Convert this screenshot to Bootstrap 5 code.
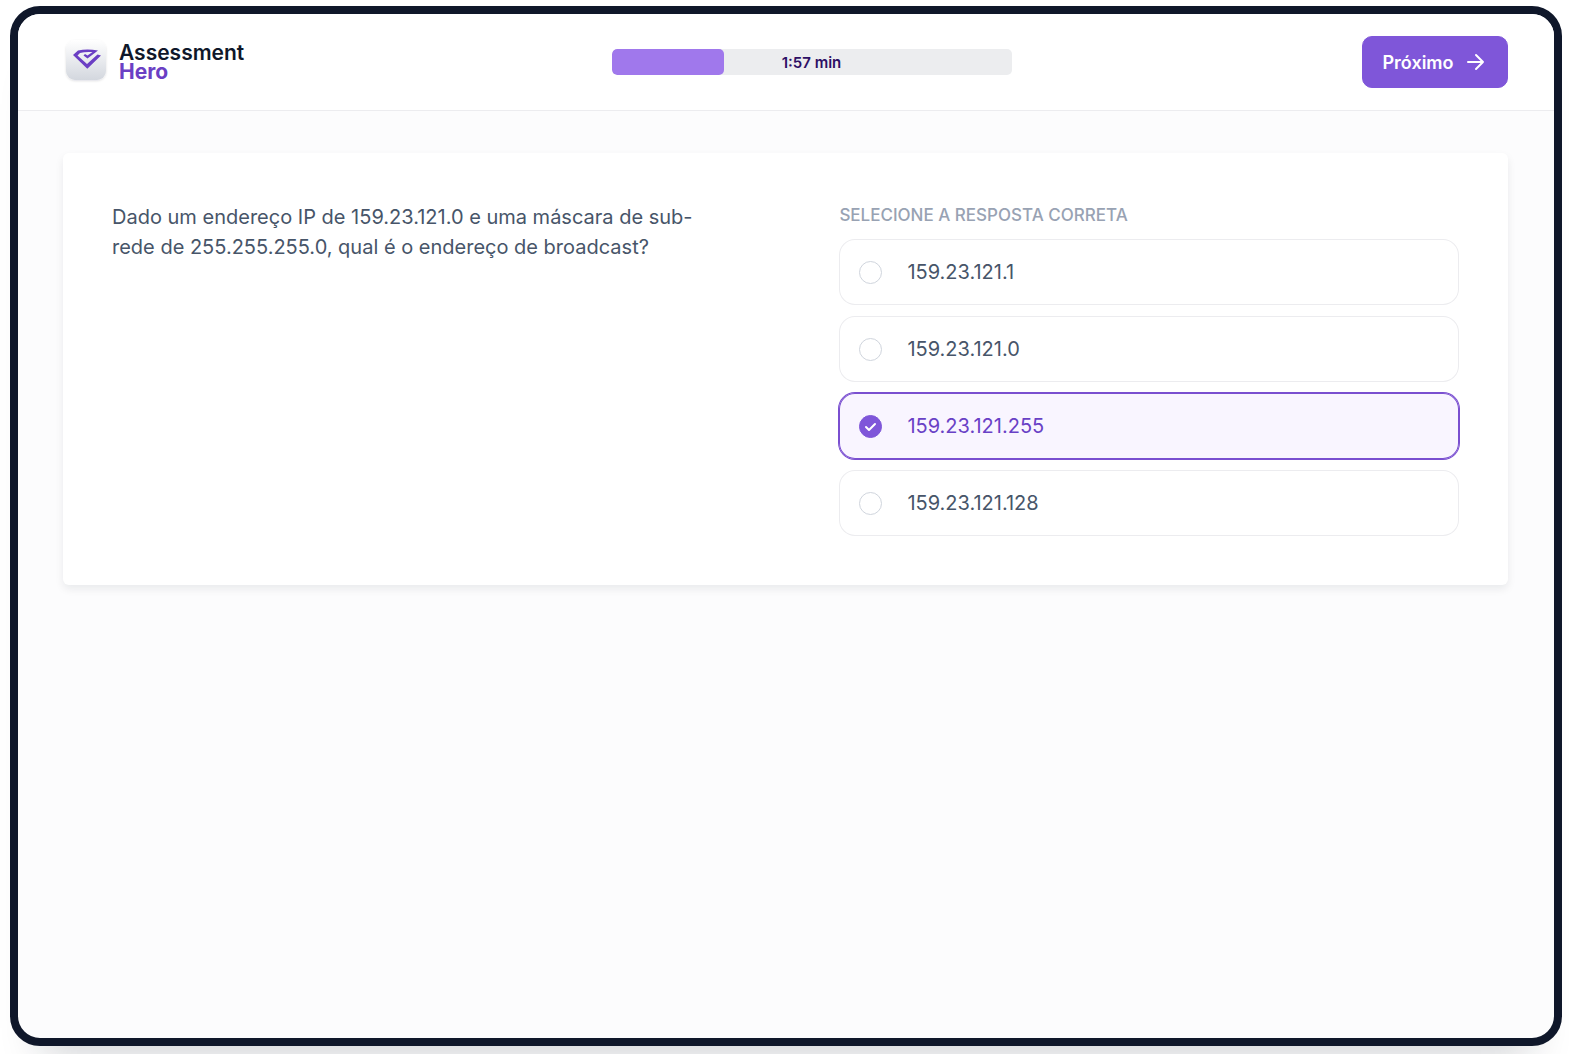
<!DOCTYPE html>
<html lang="pt-BR">
<head>
<meta charset="utf-8">
<meta name="viewport" content="width=device-width, initial-scale=1">
<title>Assessment Hero</title>
<link href="https://cdn.jsdelivr.net/npm/bootstrap@5.3.0/dist/css/bootstrap.min.css" rel="stylesheet">
<style>
  body { font-family: Inter, "Liberation Sans", sans-serif; background: #fff; color: #475569; }
  .page-shell { min-height: 100vh; overflow: hidden; }
  .device { margin: 6px 7px 8px 10px; border: 8px solid #0f172a; border-radius: 30px; background: #fcfcfd; min-height: calc(100vh - 14px); box-shadow: 0 40px 40px -32px rgba(15, 23, 42, .2); overflow: hidden; }
  .topbar { height: 97px; padding: 0 46px 0 45px; background: #fff; border-bottom: 1px solid #ececef; }
  .brand { width: 198px; color: #0f172a; font-size: 21px; line-height: 19px; font-weight: 600; gap: 9px; }
  .brand-name { color: #6b3fc4; font-weight: 700; }
  .timer { position: relative; width: 400px; height: 26px; border-radius: 5px; background: #ecedef; }
  .timer .progress-bar { background: #a078ec; border-radius: 5px; }
  .timer-text { position: absolute; inset: 0; color: #2e1065; font-size: 15px; line-height: 27px; font-weight: 600; }
  .btn-next { --bs-btn-color: #fff; --bs-btn-bg: #7f56d9; --bs-btn-border-color: #7f56d9; --bs-btn-hover-color: #fff; --bs-btn-hover-bg: #6b3fc4; --bs-btn-hover-border-color: #6b3fc4; width: 146px; height: 52px; padding: 0; border-radius: 10px; font-size: 18px; font-weight: 600; gap: 12px; }
  .content { padding: 42px 46px 42px 45px; }
  .quiz { padding: 49px; border-radius: 6px; background: #fff; box-shadow: 0 4px 8px rgba(15, 23, 42, .08); }
  .question { font-size: 20px; line-height: 30px; max-width: 600px; }
  .answers { width: 46%; }
  .legend-text { font-size: 17px; line-height: 26px; color: #98a2b3; margin-bottom: 11px; font-weight: 500; }
  .option-list { gap: 11px; }
  .option { height: 66px; padding: 0 20px; gap: 25px; border-radius: 16px; box-shadow: inset 0 0 0 1px #ececef; font-size: 20px; color: #475569; cursor: pointer; }
  .option .form-check-input { width: 23px; height: 23px; margin: 0; border-color: #d0d5dd; box-shadow: none; }
  .option:has(:checked) { background: #f9f5ff; color: #6941c6; box-shadow: 0 0 0 1px #7a4fd0, inset 0 0 0 1px #7a4fd0; }
  .option .form-check-input:checked { border-color: #7f56d9; background-color: #7f56d9; background-size: 23px 23px; background-image: url("data:image/svg+xml,%3csvg xmlns='http://www.w3.org/2000/svg' viewBox='0 0 23 23'%3e%3cpath d='M7 12l3 3 6-6' fill='none' stroke='%23fff' stroke-width='2' stroke-linecap='round' stroke-linejoin='round'/%3e%3c/svg%3e"); }
</style>
</head>
<body>
<div class="page-shell">
<div class="device">
  <header class="topbar d-flex align-items-center justify-content-between">
    <a href="#" class="brand d-flex align-items-center text-decoration-none">
      <svg width="47" height="48" viewBox="0 0 47 48" aria-hidden="true">
        <defs>
          <linearGradient id="tile" x1="0" y1="0" x2="0" y2="1"><stop offset="0" stop-color="#fff"/><stop offset="1" stop-color="#d3d7de"/></linearGradient>
          <filter id="soft" x="-20%" y="-20%" width="140%" height="140%"><feDropShadow dx="0" dy="1" stdDeviation="1" flood-color="#101828" flood-opacity=".13"/></filter>
        </defs>
        <rect x="3" y="2" width="40" height="40" rx="9" fill="url(#tile)" filter="url(#soft)"/>
        <path fill="#6b3fc4" d="M10 17 L15 12.500 Q24 10.500 35 12.500 L24.500 20.500 L20.500 17.500 L22 16 L24.500 17.500 L29.500 14 Q22 13.500 17 15 L14.500 17.500 L24 26 L34.500 16.500 L38 17.500 L24.300 30.800 Z"/>
      </svg>
      <span><span class="d-block">Assessment</span><span class="d-block brand-name">Hero</span></span>
    </a>
    <div class="timer progress" role="progressbar" aria-label="Tempo restante" aria-valuenow="28" aria-valuemin="0" aria-valuemax="100">
      <div class="progress-bar" style="width: 28%"></div>
      <span class="timer-text text-center">1:57 min</span>
    </div>
    <button type="button" class="btn btn-next d-flex align-items-center justify-content-center">
      Próximo
      <svg width="22" height="22" viewBox="0 0 22 22" fill="none" stroke="currentColor" stroke-width="2" stroke-linecap="round" stroke-linejoin="round" aria-hidden="true"><path d="M2 11h15M10 4l7 7-7 7"/></svg>
    </button>
  </header>
  <main class="content">
    <form class="quiz">
      <div class="row g-0">
        <div class="col">
          <p class="question mb-0">Dado um endereço IP de 159.23.121.0 e uma máscara de sub-rede de 255.255.255.0, qual é o endereço de broadcast?</p>
        </div>
        <fieldset class="col-auto answers">
          <legend class="legend-text text-uppercase">Selecione a resposta correta</legend>
          <div class="d-grid option-list">
            <label class="option d-flex align-items-center" for="a1"><input class="form-check-input" type="radio" name="answer" id="a1">159.23.121.1</label>
            <label class="option d-flex align-items-center" for="a2"><input class="form-check-input" type="radio" name="answer" id="a2">159.23.121.0</label>
            <label class="option d-flex align-items-center" for="a3"><input class="form-check-input" type="radio" name="answer" id="a3" checked>159.23.121.255</label>
            <label class="option d-flex align-items-center" for="a4"><input class="form-check-input" type="radio" name="answer" id="a4">159.23.121.128</label>
          </div>
        </fieldset>
      </div>
    </form>
  </main>
</div>
</div>
<script src="https://cdn.jsdelivr.net/npm/bootstrap@5.3.0/dist/js/bootstrap.bundle.min.js"></script>
</body>
</html>
